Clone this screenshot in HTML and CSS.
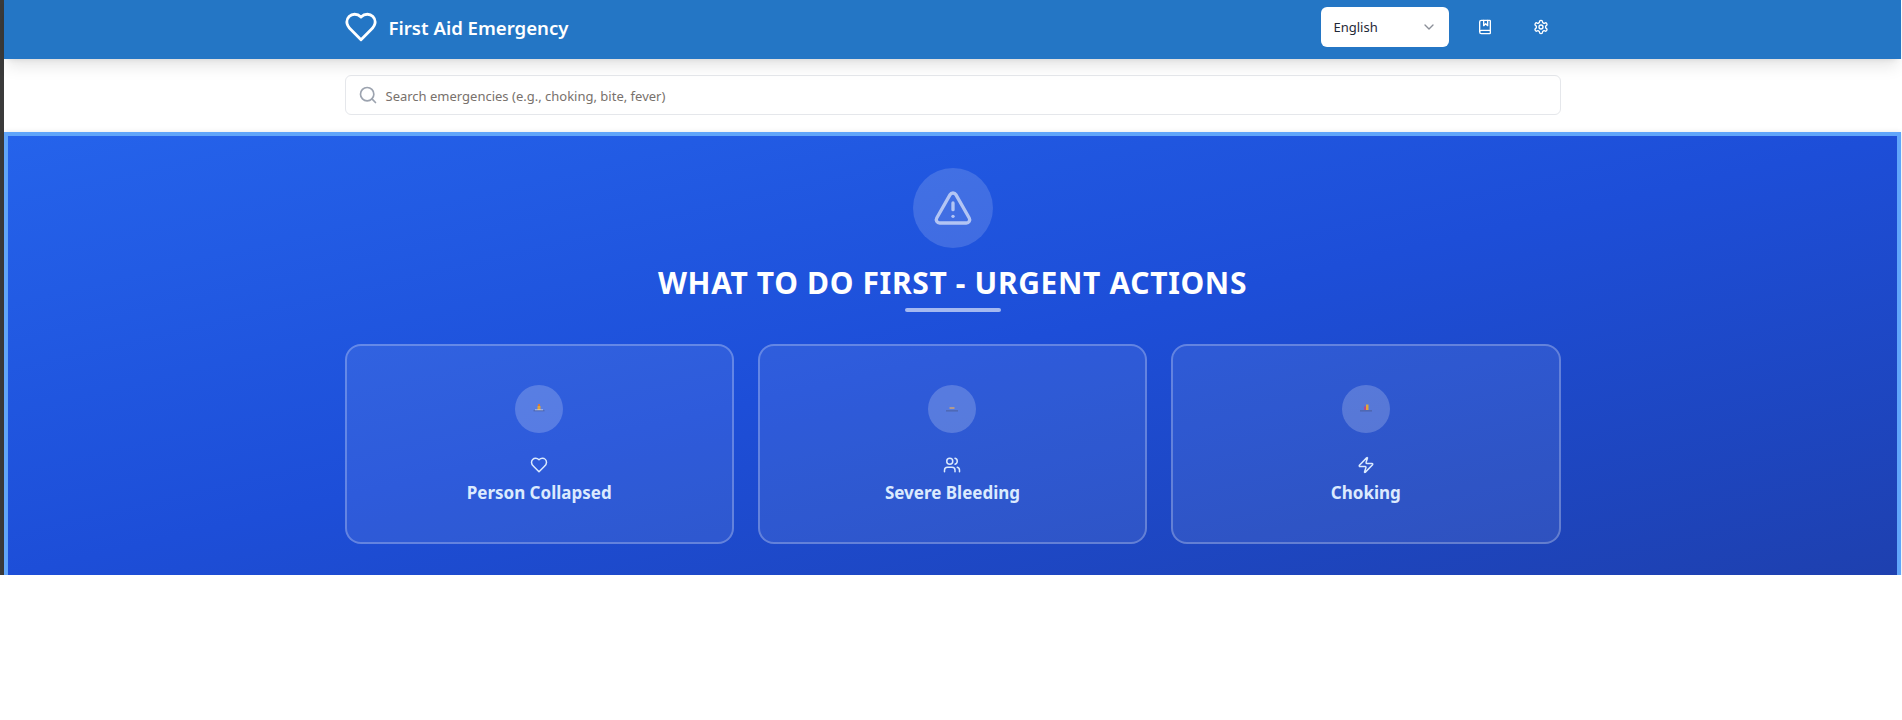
FILE: index.html
```html
<!DOCTYPE html>
<html lang="en">
<head>
  <meta charset="UTF-8">
  <title>First Aid Emergency</title>
  <link rel="stylesheet" href="styles.css">
</head>
<body>
  <div class="frame">
    <div class="strip"></div>
    <div class="page">
      <header class="topbar">
        <div class="wrap topbar-row">
          <div class="brand">
            <svg class="brand-icon" viewBox="0 0 24 24"><path d="M19 14c1.49-1.46 3-3.21 3-5.5A5.5 5.5 0 0 0 16.5 3c-1.76 0-3 .5-4.5 2-1.5-1.5-2.74-2-4.5-2A5.5 5.5 0 0 0 2 8.5c0 2.3 1.5 4.05 3 5.5l7 7Z"/></svg>
            <span class="brand-name">First Aid Emergency</span>
          </div>
          <div class="tools">
            <div class="lang">
              <span>English</span>
              <svg class="chevron" viewBox="0 0 24 24"><path d="m6 9 6 6 6-6"/></svg>
            </div>
            <button class="tool-btn">
              <svg viewBox="0 0 24 24"><path d="M10 2v8l3-3 3 3V2"/><path d="M4 19.5v-15A2.5 2.5 0 0 1 6.5 2H19a1 1 0 0 1 1 1v18a1 1 0 0 1-1 1H6.5a1 1 0 0 1 0-5H20"/></svg>
            </button>
            <button class="tool-btn">
              <svg viewBox="0 0 24 24"><path d="M12.22 2h-.44a2 2 0 0 0-2 2v.18a2 2 0 0 1-1 1.73l-.43.25a2 2 0 0 1-2 0l-.15-.08a2 2 0 0 0-2.73.73l-.22.38a2 2 0 0 0 .73 2.73l.15.1a2 2 0 0 1 1 1.72v.51a2 2 0 0 1-1 1.74l-.15.09a2 2 0 0 0-.73 2.73l.22.38a2 2 0 0 0 2.73.73l.15-.08a2 2 0 0 1 2 0l.43.25a2 2 0 0 1 1 1.73V20a2 2 0 0 0 2 2h.44a2 2 0 0 0 2-2v-.18a2 2 0 0 1 1-1.73l.43-.25a2 2 0 0 1 2 0l.15.08a2 2 0 0 0 2.73-.73l.22-.39a2 2 0 0 0-.73-2.73l-.15-.08a2 2 0 0 1-1-1.74v-.5a2 2 0 0 1 1-1.74l.15-.09a2 2 0 0 0 .73-2.73l-.22-.38a2 2 0 0 0-2.73-.73l-.15.08a2 2 0 0 1-2 0l-.43-.25a2 2 0 0 1-1-1.73V4a2 2 0 0 0-2-2z"/><circle cx="12" cy="12" r="3"/></svg>
            </button>
          </div>
        </div>
      </header>

      <div class="search-band">
        <div class="wrap">
          <div class="search">
            <svg class="search-icon" viewBox="0 0 24 24"><circle cx="11" cy="11" r="8"/><path d="m21 21-4.3-4.3"/></svg>
            <span class="search-hint">Search emergencies (e.g., choking, bite, fever)</span>
          </div>
        </div>
      </div>

      <section class="hero">
        <div class="wrap">
          <div class="alert-badge">
            <svg viewBox="0 0 24 24"><path d="m21.73 18-8-14a2 2 0 0 0-3.48 0l-8 14A2 2 0 0 0 4 21h16a2 2 0 0 0 1.73-3"/><path d="M12 9v4"/><path d="M12 17h.01"/></svg>
          </div>
          <h1 class="hero-title">WHAT TO DO FIRST - URGENT ACTIONS</h1>
          <div class="hero-rule"></div>

          <div class="cards">
            <div class="card">
              <div class="pic">
                <svg viewBox="0 0 16 16"><rect x="7" y="3" width="2" height="2" fill="#d9763a"/><rect x="6.5" y="5" width="3" height="4" fill="#e0a63c"/><rect x="4" y="8.5" width="8" height="1" fill="#d5dcf0"/><rect x="2.5" y="9.5" width="11" height="0.7" fill="#46588f"/></svg>
              </div>
              <svg class="card-icon" viewBox="0 0 24 24"><path d="M19 14c1.49-1.46 3-3.21 3-5.5A5.5 5.5 0 0 0 16.5 3c-1.76 0-3 .5-4.5 2-1.5-1.5-2.74-2-4.5-2A5.5 5.5 0 0 0 2 8.5c0 2.3 1.5 4.05 3 5.5l7 7Z"/></svg>
              <h3 class="card-title">Person Collapsed</h3>
            </div>
            <div class="card">
              <div class="pic">
                <svg viewBox="0 0 16 16"><rect x="5.5" y="6" width="5" height="2" fill="#b09a90"/><rect x="2" y="9.5" width="12" height="0.8" fill="#46588f"/></svg>
              </div>
              <svg class="card-icon" viewBox="0 0 24 24"><path d="M16 21v-2a4 4 0 0 0-4-4H6a4 4 0 0 0-4 4v2"/><circle cx="9" cy="7" r="4"/><path d="M22 21v-2a4 4 0 0 0-3-3.87"/><path d="M16 3.13a4 4 0 0 1 0 7.75"/></svg>
              <h3 class="card-title">Severe Bleeding</h3>
            </div>
            <div class="card">
              <div class="pic">
                <svg viewBox="0 0 16 16"><rect x="8" y="3.5" width="2.5" height="5.5" fill="#e0a63c"/><rect x="6" y="5.5" width="2" height="3.5" fill="#b8478a"/><rect x="2" y="9.5" width="12" height="0.8" fill="#46588f"/></svg>
              </div>
              <svg class="card-icon" viewBox="0 0 24 24"><path d="M4 14a1 1 0 0 1-.78-1.63l9.9-10.2a.5.5 0 0 1 .86.46l-1.92 6.02A1 1 0 0 0 13 10h7a1 1 0 0 1 .78 1.63l-9.9 10.2a.5.5 0 0 1-.86-.46l1.92-6.02A1 1 0 0 0 11 14z"/></svg>
              <h3 class="card-title">Choking</h3>
            </div>
          </div>
        </div>
      </section>
    </div>
  </div>
</body>
</html>
```

FILE: styles.css
```css
* { box-sizing: border-box; }
body {
  margin: 0;
  background: #fff;
  font-family: "Noto Sans", "Open Sans", sans-serif;
}
svg {
  fill: none;
  stroke: currentColor;
  stroke-width: 2;
  stroke-linecap: round;
  stroke-linejoin: round;
}
.frame {
  display: flex;
  height: 575px;
  overflow: hidden;
}
.strip {
  width: 4px;
  background: #3a3a3a;
}
.page {
  flex: 1;
  min-width: 0;
  margin-right: 1px;
}
.wrap {
  width: 1216px;
  margin: 0 auto;
}

.topbar {
  position: relative;
  z-index: 2;
  height: 59px;
  background: #2476c5;
  box-shadow: 0 10px 15px -3px rgba(0, 0, 0, 0.1), 0 4px 6px -4px rgba(0, 0, 0, 0.1);
}
.topbar-row {
  display: flex;
  align-items: center;
  justify-content: space-between;
  height: 54px;
}
.brand {
  display: flex;
  align-items: center;
  gap: 11px;
  color: #fff;
}
.brand-icon { width: 34px; height: 34px; margin-left: -1px; }
.brand-name {
  font-size: 18.6px;
  font-weight: 600;
}
.tools {
  display: flex;
  align-items: center;
  gap: 16px;
}
.lang {
  display: flex;
  align-items: center;
  justify-content: space-between;
  width: 128px;
  height: 40px;
  padding: 0 13px;
  background: #fff;
  border-radius: 6px;
  font-size: 13px;
  color: #1f2937;
}
.chevron { width: 16px; height: 16px; color: #8b8f98; margin-right: -1px; }
.tool-btn {
  display: flex;
  align-items: center;
  justify-content: center;
  width: 40px;
  height: 40px;
  padding: 0;
  border: 0;
  background: none;
  color: #fff;
}
.tool-btn svg { width: 16px; height: 16px; }

.search-band {
  height: 73px;
  padding-top: 16px;
  background: #fff;
}
.search {
  display: flex;
  align-items: center;
  gap: 8px;
  height: 40px;
  padding: 0 12px;
  background: #fff;
  border: 1px solid #e5e7eb;
  border-radius: 6px;
}
.search-icon { width: 20px; height: 20px; color: #9ca3af; }
.search-hint { padding-top: 1px; font-size: 13px; color: #78716c; }

.hero {
  height: 448px;
  padding-top: 32px;
  border: 4px solid #60a5fa;
  background: linear-gradient(to bottom right, #2563eb, #1d4ed8 50%, #1e40af);
  box-shadow: 0 0 5px rgba(0, 0, 0, 0.1);
}
.alert-badge {
  display: flex;
  align-items: center;
  justify-content: center;
  width: 80px;
  height: 80px;
  margin: 0 auto;
  border-radius: 50%;
  background: rgba(255, 255, 255, 0.15);
  color: rgba(255, 255, 255, 0.6);
}
.alert-badge svg { width: 40px; height: 40px; }
.hero-title {
  margin: 15px 0 0;
  text-align: center;
  font-size: 30px;
  line-height: 40px;
  font-weight: 700;
  letter-spacing: 0.65px;
  color: #fff;
}
.hero-rule {
  width: 96px;
  height: 4px;
  margin: 5px auto 0;
  border-radius: 4px;
  background: rgba(255, 255, 255, 0.6);
}
.cards {
  display: grid;
  grid-template-columns: repeat(3, 1fr);
  gap: 24px;
  margin-top: 32px;
}
.card {
  display: flex;
  flex-direction: column;
  align-items: center;
  height: 200px;
  padding-top: 39px;
  border: 2px solid rgba(255, 255, 255, 0.25);
  border-radius: 16px;
  background: rgba(255, 255, 255, 0.08);
}
.pic {
  display: flex;
  align-items: center;
  justify-content: center;
  width: 48px;
  height: 48px;
  border-radius: 50%;
  background: rgba(255, 255, 255, 0.2);
}
.pic svg { width: 16px; height: 16px; stroke: none; }
.card-icon {
  width: 18px;
  height: 18px;
  margin-top: 23px;
  color: #dbeafe;
}
.card-title {
  margin: 5px 0 0;
  font-size: 17px;
  line-height: 28px;
  font-weight: 700;
  color: #dbeafe;
}
```
